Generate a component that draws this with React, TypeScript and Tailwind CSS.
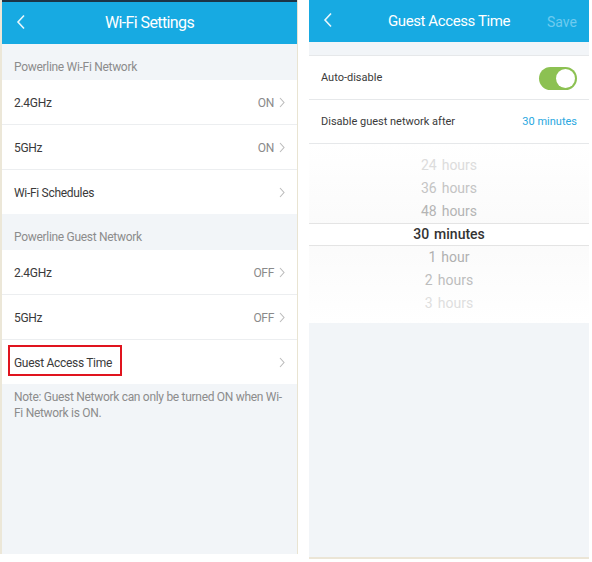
import { ReactNode } from "react";

const Chevron = () => (
  <svg width="6" height="11" viewBox="0 0 6 11" className="ml-[5px]">
    <path d="M1 1l4 4.5L1 10" fill="none" stroke="#bbbbbb" strokeWidth="1.1" />
  </svg>
);

const Back = () => (
  <svg width="10" height="16" viewBox="0 0 10 16">
    <path d="M8 1.5L2 8l6 6.5" fill="none" stroke="#ffffff" strokeWidth="1.6" strokeOpacity="0.9" />
  </svg>
);

const Row = ({ label, value, last }: { label: ReactNode; value?: string; last?: boolean }) => (
  <div
    className={`flex items-center bg-white pl-[12px] pr-[12px] pt-[1px] ${
      last ? "h-[44px]" : "h-[45px] border-b border-[#eceef0]"
    }`}
  >
    <div className="flex-1 text-[12px] tracking-[-0.3px] text-[#3a3a3a]">{label}</div>
    {value && <span className="text-[12px] tracking-[-0.3px] text-[#8a8a8a]">{value}</span>}
    <Chevron />
  </div>
);

const PICKER = [
  { t: "24", u: "hours", c: "text-[#dcdcdc]" },
  { t: "36", u: "hours", c: "text-[#c4c4c4]" },
  { t: "48", u: "hours", c: "text-[#b4b4b4]" },
  { t: "30", u: "minutes", c: "text-[#333333] font-medium", sel: true },
  { t: "1", u: "hour", c: "text-[#b0b0b0]" },
  { t: "2", u: "hours", c: "text-[#bdbdbd]" },
  { t: "3", u: "hours", c: "text-[#dedede]" },
];

export default function App() {
  return (
    <div
      className="w-[592px] h-[562px] bg-white flex items-start"
      style={{ fontFamily: "Roboto, 'Noto Sans', sans-serif" }}
    >
      {/* Wi-Fi Settings */}
      <div className="w-[298px] h-[554px] flex flex-col bg-[#f2f5f8] border-l-2 border-[#ece7d8] border-r border-r-[#e9e4d2]">
        <div className="h-[44px] bg-[#17aae2] border-t-2 border-[#1c3446] flex items-center relative shrink-0">
          <div className="absolute left-[14px] top-[12px]">
            <Back />
          </div>
          <div className="flex-1 text-center text-white text-[16px] tracking-[-0.6px]">Wi-Fi Settings</div>
        </div>

        <div className="h-[36px] flex items-end pb-[4px] pl-[12px] text-[12px] tracking-[-0.3px] text-[#8c8c8c]">
          Powerline Wi-Fi Network
        </div>
        <Row label="2.4GHz" value="ON" />
        <Row label="5GHz" value="ON" />
        <Row label="Wi-Fi Schedules" last />

        <div className="h-[36px] flex items-end pb-[4px] pl-[12px] text-[12px] tracking-[-0.3px] text-[#8c8c8c]">
          Powerline Guest Network
        </div>
        <Row label="2.4GHz" value="OFF" />
        <Row label="5GHz" value="OFF" />
        <Row
          label={
            <span className="relative">
              Guest Access Time
              <span className="absolute left-[-6px] top-[-11px] w-[114px] h-[31px] border-2 border-[#e0141e]" />
            </span>
          }
          last
        />

        <div className="px-[12px] pt-[5px] text-[12px] tracking-[-0.3px] leading-[16px] text-[#8c8c8c]">
          Note: Guest Network can only be turned ON when Wi-Fi Network is ON.
        </div>
      </div>

      {/* Guest Access Time */}
      <div className="ml-[11px] w-[280px] h-[559px] flex flex-col bg-[#f2f5f8] border-b-2 border-[#ebe5d6]">
        <div className="h-[42px] bg-[#17aae2] flex items-center relative shrink-0">
          <div className="absolute left-[14px] top-[12px]">
            <Back />
          </div>
          <div className="flex-1 text-center text-white text-[15px] tracking-[-0.4px]">Guest Access Time</div>
          <div className="absolute right-[12px] top-[12px] text-[14px] text-[#6ecbef]">Save</div>
        </div>

        <div className="h-[13px] shrink-0" />
        <div className="flex items-center h-[45px] bg-white px-[12px] pt-[2px] border-y border-[#e6e8ea]">
          <div className="flex-1 text-[11px] text-[#3a3a3a]">Auto-disable</div>
          <div className="w-[38px] h-[23px] rounded-full bg-[#8cc152] relative">
            <div className="absolute right-[2px] top-[2px] w-[19px] h-[19px] rounded-full bg-white" />
          </div>
        </div>
        <div className="flex items-center h-[44px] bg-white px-[12px] pt-[2px] border-b border-[#e6e8ea]">
          <div className="flex-1 text-[11px] text-[#3a3a3a]">Disable guest network after</div>
          <span className="text-[11px] text-[#29a8df]">30 minutes</span>
        </div>

        <div className="h-[179px] bg-gradient-to-b from-white via-[#fafafa] to-white pt-[10px] flex flex-col">
          {PICKER.map((p) => (
            <div
              key={p.t}
              className={`h-[23px] flex items-center justify-center text-[14px] ${p.c} ${
                p.sel ? "bg-white border-y border-[#e4e4e4]" : ""
              }`}
            >
              <span>{p.t}</span>
              <span className="ml-[5px]">{p.u}</span>
            </div>
          ))}
        </div>
      </div>
    </div>
  );
}
